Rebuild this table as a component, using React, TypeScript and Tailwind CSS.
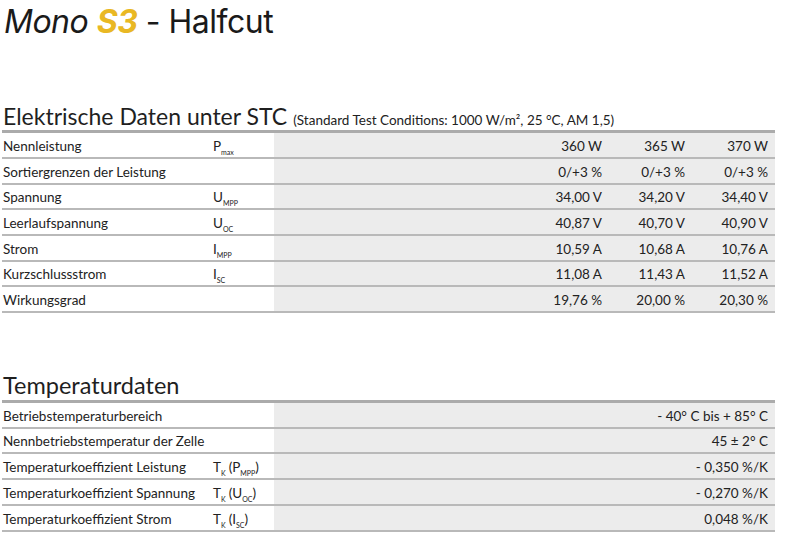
import React from "react";

/** ---------- Daten ---------- */
type Sym = { base: string; sub?: string; wrap?: boolean };

type ElRow = { label: string; sym?: Sym; values: string[] };

const elektrisch: ElRow[] = [
  { label: "Nennleistung", sym: { base: "P", sub: "max" }, values: ["360 W", "365 W", "370 W"] },
  { label: "Sortiergrenzen der Leistung", values: ["0/+3 %", "0/+3 %", "0/+3 %"] },
  { label: "Spannung", sym: { base: "U", sub: "MPP" }, values: ["34,00 V", "34,20 V", "34,40 V"] },
  { label: "Leerlaufspannung", sym: { base: "U", sub: "OC" }, values: ["40,87 V", "40,70 V", "40,90 V"] },
  { label: "Strom", sym: { base: "I", sub: "MPP" }, values: ["10,59 A", "10,68 A", "10,76 A"] },
  { label: "Kurzschlussstrom", sym: { base: "I", sub: "SC" }, values: ["11,08 A", "11,43 A", "11,52 A"] },
  { label: "Wirkungsgrad", values: ["19,76 %", "20,00 %", "20,30 %"] },
];

type TempRow = { label: string; sym?: Sym; value: string };

const temperatur: TempRow[] = [
  { label: "Betriebstemperaturbereich", value: "- 40° C bis + 85° C" },
  { label: "Nennbetriebstemperatur der Zelle", value: "45 ± 2° C" },
  { label: "Temperaturkoeffizient Leistung", sym: { base: "P", sub: "MPP", wrap: true }, value: "- 0,350 %/K" },
  { label: "Temperaturkoeffizient Spannung", sym: { base: "U", sub: "OC", wrap: true }, value: "- 0,270 %/K" },
  { label: "Temperaturkoeffizient Strom", sym: { base: "I", sub: "SC", wrap: true }, value: "0,048 %/K" },
];

/** ---------- Kleine Bausteine ---------- */
const Sub = ({ children }: { children: React.ReactNode }) => (
  <span className="relative top-[4px] text-[7px] leading-none">{children}</span>
);

// Formelzeichen, z. B. P_max oder T_K(P_MPP)
const Symbol = ({ sym }: { sym: Sym }) => {
  if (sym.wrap) {
    return (
      <span>
        T<Sub>K</Sub>
        <span className="ml-[3px]">(</span>
        {sym.base}
        <Sub>{sym.sub}</Sub>)
      </span>
    );
  }
  return (
    <span>
      {sym.base}
      <Sub>{sym.sub}</Sub>
    </span>
  );
};

const Row = ({ label, sym, children }: { label: string; sym?: Sym; children: React.ReactNode }) => (
  <div className="flex h-[25.7px] border-b-2 border-[#b9b9b9]">
    <div className="flex w-[272px] items-center pl-[1px] pt-[2px]">
      <span className="w-[210px]">{label}</span>
      {sym && <Symbol sym={sym} />}
    </div>
    <div className="flex flex-1 items-center justify-end bg-[#ececec] pr-[7px] pt-[2px]">{children}</div>
  </div>
);

/** ---------- Seite ---------- */
export default function App() {
  return (
    <div className="h-[551px] w-[800px] overflow-hidden bg-white font-['Lato',sans-serif] text-[#222]">
      {/* Titel */}
      <h1 className="pl-[4px] pt-[2px] font-['Inter',sans-serif] text-[32px] leading-[40px] tracking-[-0.5px] text-[#1a1a1a]">
        <span className="italic">Mono</span>{" "}
        <span className="font-bold italic text-[#e9b824]">S3</span> - Halfcut
      </h1>

      {/* Elektrische Daten */}
      <div className="mt-[60px] flex items-baseline pl-[3px]">
        <h2 className="text-[23px] leading-[28px] text-[#1f1f1f]">Elektrische Daten unter STC</h2>
        <span className="ml-[6px] text-[13.5px]">(Standard Test Conditions: 1000 W/m², 25 °C, AM 1,5)</span>
      </div>
      <div className="ml-[2px] w-[773px] border-t-[3px] border-[#ababab] text-[13.5px]">
        {elektrisch.map((r) => (
          <Row key={r.label} label={r.label} sym={r.sym}>
            {r.values.map((v) => (
              <span key={v} className="w-[83px] text-right">
                {v}
              </span>
            ))}
          </Row>
        ))}
      </div>

      {/* Temperaturdaten */}
      <h2 className="mt-[58px] pl-[3px] text-[23.5px] leading-[28px] text-[#1f1f1f]">Temperaturdaten</h2>
      <div className="ml-[2px] mt-[1px] w-[773px] border-t-[3px] border-[#ababab] text-[13.5px]">
        {temperatur.map((r) => (
          <Row key={r.label} label={r.label} sym={r.sym}>
            <span>{r.value}</span>
          </Row>
        ))}
      </div>
    </div>
  );
}
